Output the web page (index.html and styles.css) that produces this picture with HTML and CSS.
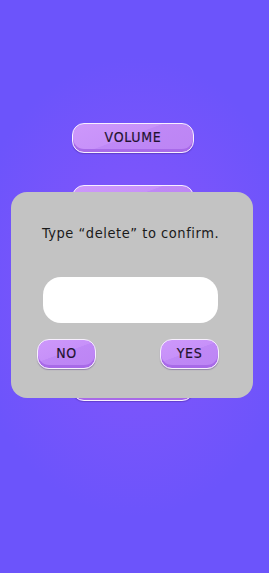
FILE: index.html
```html
<!DOCTYPE html>
<html>
<head>
<meta charset="utf-8">
<link rel="stylesheet" href="styles.css">
</head>
<body>
<div class="screen">
  <div class="menu">
    <button class="pill wide">VOLUME</button>
    <button class="pill wide">MUSIC</button>
    <button class="pill wide">LANGUAGE</button>
    <button class="pill wide">RESET</button>
    <button class="pill wide">DELETE</button>
  </div>
  <div class="dialog">
    <p class="prompt">Type “delete” to confirm.</p>
    <div class="field"></div>
    <div class="actions">
      <button class="pill small">NO</button>
      <button class="pill small yes">YES</button>
    </div>
  </div>
</div>
</body>
</html>
```
FILE: styles.css
```css
html, body {
  margin: 0;
  padding: 0;
}
.screen {
  position: relative;
  width: 269px;
  height: 573px;
  overflow: hidden;
  background: radial-gradient(ellipse 170px 230px at 50% 50%, #8b55fc 0%, #7a55fb 50%, #6c54fb 100%);
  font-family: "DejaVu Sans Condensed", "DejaVu Sans", sans-serif;
}
.menu {
  display: flex;
  flex-direction: column;
  align-items: center;
  gap: 32px;
  padding-top: 123px;
  padding-right: 3px;
}
.pill {
  box-sizing: border-box;
  height: 30px;
  border: 1.5px solid #f8f0ff;
  border-radius: 12px;
  background: linear-gradient(160deg, #cd98fb 0%, #c791f9 45%, #bf88f6 46%, #bc84f4 100%);
  box-shadow: inset 0 -3px 0 #a86ae8, 0 1px 1px rgba(60, 20, 120, 0.35);
  color: #22122f;
  -webkit-text-stroke: 0.15px #22122f;
  font-family: "DejaVu Sans Condensed", "DejaVu Sans", sans-serif;
  font-size: 14px;
  letter-spacing: 0.7px;
  padding: 0 0 2px 0;
  margin: 0;
}
.wide {
  width: 122px;
}
.dialog {
  position: absolute;
  left: 11px;
  top: 192px;
  width: 242px;
  height: 206px;
  box-sizing: border-box;
  background: #c3c3c3;
  border-radius: 16px;
  display: flex;
  flex-direction: column;
  align-items: center;
}
.prompt {
  margin: 32px 0 0 0;
  padding-right: 3px;
  line-height: 18px;
  font-size: 14.5px;
  letter-spacing: 0.55px;
  color: #1a1a1a;
}
.field {
  margin-top: 35px;
  width: 175px;
  height: 46px;
  margin-right: 3px;
  background: #ffffff;
  border-radius: 18px;
}
.actions {
  align-self: stretch;
  display: flex;
  justify-content: space-between;
  padding: 0 34px 0 26px;
  margin-top: 16px;
}
.small {
  width: 59px;
}
```
